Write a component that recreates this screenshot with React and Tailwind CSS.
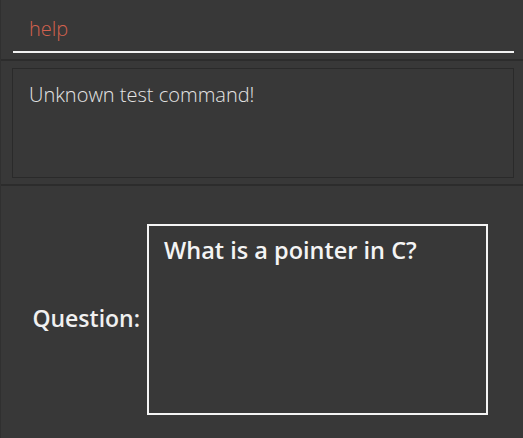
export default function App() {
  return (
    <div
      className="flex h-[438px] w-[523px] flex-col bg-[#383838] border-l border-[#303030]"
      style={{ fontFamily: '"Open Sans", "Noto Sans", sans-serif' }}
    >
      <div className="h-[59px] pl-[12px] pr-[9px] pt-[14px]">
        <div className="h-[39px] border-b-2 border-[#f2f2f2] pl-[16px] text-[20px] font-light leading-[30px] text-[#d3614e]">
          help
        </div>
      </div>

      <div className="border-t-2 border-[#2c2c2c] pl-[11px] pr-[9px] pt-[7px] pb-[6px]">
        <div className="h-[110px] border border-[#2a2a2a] px-[16px] pt-[12px] text-[20px] font-light leading-[28px] text-[#e4e4e4]">
          Unknown test command!
        </div>
      </div>

      <div className="flex flex-1 items-start border-t-2 border-[#2c2c2c] pt-[38px]">
        <div className="flex h-[191px] w-[139px] items-center justify-end pb-[2px]">
          <span className="text-[23px] font-semibold text-[#f0f0f0]">Question:</span>
        </div>
        <div className="ml-[7px] h-[191px] w-[341px] border-2 border-[#f4f4f4] px-[15px] pt-[7px]">
          <p className="text-[23.5px] font-semibold leading-[34px] text-[#f4f4f4]">What is a pointer in C?</p>
        </div>
      </div>
    </div>
  );
}
